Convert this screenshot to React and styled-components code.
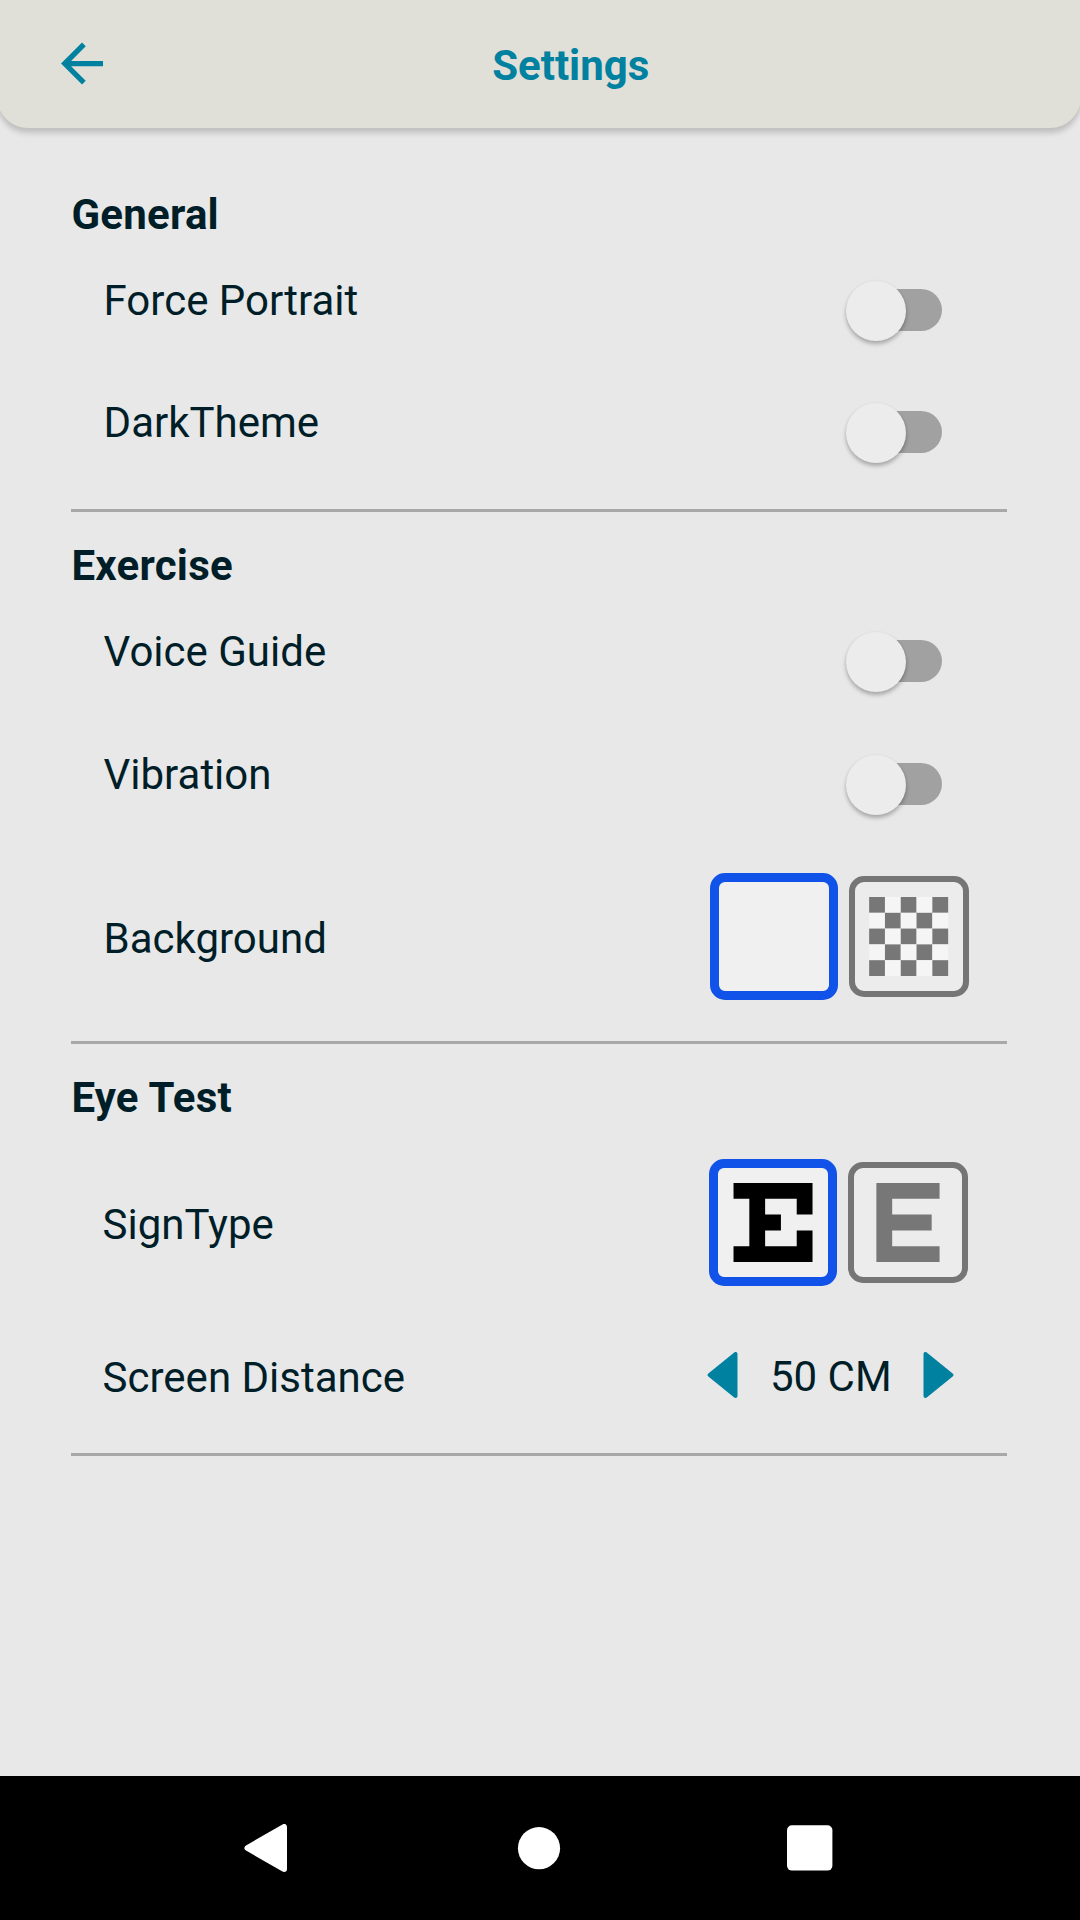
import React, { useState } from "react";
import styled, { createGlobalStyle } from "styled-components";

const GlobalStyle = createGlobalStyle`
  * { box-sizing: border-box; }
  body { margin: 0; background: #e8e8e8; font-family: Roboto, "Liberation Sans", sans-serif; }
  button { border: 0; padding: 0; background: none; font: inherit; color: inherit; }
  svg { display: block; }
`;

const Screen = styled.div`
  display: flex;
  flex-direction: column;
  width: 1080px;
  height: 1920px;
  overflow: hidden;
  background: #e8e8e8;
  color: #001e28;
  font-size: 42px;
  line-height: 50px;
`;

const Header = styled.header`
  display: grid;
  grid-template-columns: 63px 1fr;
  align-items: start;
  flex: none;
  height: 128px;
  margin: 0 -1px 0 -3px;
  padding: 32px 53px 0;
  color: #0081a0;
  background: #e0e0d8;
  border-radius: 0 0 31px 31px;
  box-shadow: 0 6px 5px rgba(0, 0, 0, 0.13), 0 2px 4px rgba(0, 0, 0, 0.06);
`;

const Title = styled.h1`
  margin: 9px 0 0 0.5px;
  font-size: 42px;
  line-height: 50px;
  font-weight: 700;
  text-align: center;
`;

const Content = styled.main`
  flex: 1;
  padding: 62px 73px 0 71.4px;
`;

const Section = styled.section`
  border-bottom: 3px solid #a8a8a8;
  height: ${(p) => p.$height}px;
  margin-bottom: 29px;
`;

const SectionTitle = styled.h2`
  margin: 0 0 36px;
  font-size: 42px;
  line-height: 50px;
  font-weight: 700;
  letter-spacing: 0.25px;
`;

const Row = styled.div`
  display: flex;
  justify-content: space-between;
  align-items: flex-start;
  height: ${(p) => p.$height}px;
  padding-left: ${(p) => p.$inset ?? 32.2}px;
  padding-right: ${(p) => p.$end ?? 65}px;
`;

const Label = styled.span`
  padding-top: ${(p) => p.$top ?? 0}px;
  white-space: nowrap;
`;

const Track = styled.button`
  display: flex;
  align-items: center;
  width: 84px;
  height: 42px;
  margin-top: 13px;
  border-radius: 21px;
  background: #a1a1a1;
`;

const Thumb = styled.span`
  flex: none;
  width: 60px;
  height: 60px;
  margin-top: 1px;
  margin-left: ${(p) => (p.$on ? 36 : -11.6)}px;
  border-radius: 50%;
  background: #ececec;
  box-shadow: 0 3px 4px rgba(0, 0, 0, 0.28), 0 0 3px rgba(0, 0, 0, 0.04);
`;

const Choices = styled.div`
  display: flex;
  align-items: center;
  gap: 11px;
`;

const Choice = styled.button`
  display: grid;
  place-items: center;
  width: ${(p) => (p.$selected ? 127.3 : 120.5)}px;
  height: ${(p) => (p.$selected ? 127 : 121)}px;
  border: ${(p) => (p.$selected ? "9px solid #1153e9" : "6px solid #757575")};
  border-radius: 15px;
  background: ${(p) => (p.$selected ? "#f0f0f0" : "#ececec")};
`;

const Stepper = styled.div`
  display: flex;
  align-items: center;
  gap: 32px;
  height: 46px;
`;

const StepButton = styled.button`
  width: 31px;
  height: 46px;
  color: #0081a0;
`;

const Value = styled.span`
  width: 120.6px;
  padding: 3px 1px 0 0;
  text-align: center;
  white-space: nowrap;
`;

const NavBar = styled.nav`
  display: grid;
  grid-template-columns: 43px 47px 46px;
  column-gap: 226.5px;
  align-items: center;
  flex: none;
  height: 144px;
  padding-left: 244px;
  background: #000;
  color: #fff;
`;

const BackArrow = () => (
  <svg width="63" height="63" viewBox="-0.2 0 24 24" fill="currentColor">
    <path d="M20 11H7.83l5.59-5.59L12 4l-8 8 8 8 1.41-1.41L7.83 13H20z" />
  </svg>
);

const Triangle = ({ flip }) => (
  <svg width="31" height="46" viewBox="0 0 31 46">
    <path
      transform={flip ? "translate(31 0) scale(-1 1)" : undefined}
      d="M2.6 23L28.5 2V44Z"
      fill="currentColor"
      stroke="currentColor"
      strokeWidth="4"
      strokeLinejoin="round"
    />
  </svg>
);

const Checker = () => (
  <svg width="79" height="79" viewBox="-0.01 0 5 5" overflow="visible">
    {Array.from({ length: 25 }, (_, i) => (
      <rect
        key={i}
        x={i % 5}
        y={Math.floor(i / 5)}
        width="1"
        height="1"
        fill={i % 2 ? "#f5f5f5" : "#777"}
      />
    ))}
  </svg>
);

const SerifSign = () => (
  <svg width="79" height="79" viewBox="0.03 0 5 5" overflow="visible">
    <path d="M0 0H5V2H4V1H2V2H3V3H2V4H4V3H5V5H0V4H1V1H0Z" fill="#000" />
  </svg>
);

const BlockSign = () => (
  <svg width="79" height="79" viewBox="-0.03 0 5 5">
    <path d="M.5 0H4.5V1H1.5V2H4V3H1.5V4H4.5V5H.5Z" fill="#777" />
  </svg>
);

function SwitchRow({ label, height }) {
  const [on, setOn] = useState(false);
  return (
    <Row $height={height}>
      <Label>{label}</Label>
      <Track role="switch" aria-checked={on} aria-label={label} onClick={() => setOn(!on)}>
        <Thumb $on={on} />
      </Track>
    </Row>
  );
}

export default function App() {
  const [background, setBackground] = useState(0);
  const [sign, setSign] = useState(0);
  const [distance, setDistance] = useState(50);

  return (
    <Screen>
      <GlobalStyle />
      <Header>
        <button aria-label="Back"><BackArrow /></button>
        <Title>Settings</Title>
      </Header>
      <Content>
        <Section $height={322}>
          <SectionTitle>General</SectionTitle>
          <SwitchRow label="Force Portrait" height={122} />
          <SwitchRow label="DarkTheme" height={100} />
        </Section>
        <Section $height={503}>
          <SectionTitle>Exercise</SectionTitle>
          <SwitchRow label="Voice Guide" height={123} />
          <SwitchRow label="Vibration" height={123} />
          <Row $height={127} $end={37.8}>
            <Label $top={41}>Background</Label>
            <Choices>
              <Choice $selected={background === 0} aria-label="Plain" onClick={() => setBackground(0)} />
              <Choice $selected={background === 1} aria-label="Checkered" onClick={() => setBackground(1)}>
                <Checker />
              </Choice>
            </Choices>
          </Row>
        </Section>
        <Section $height={383}>
          <SectionTitle>Eye Test</SectionTitle>
          <Row $height={193} $inset={31.2} $end={38.8}>
            <Label $top={41}>SignType</Label>
            <Choices>
              <Choice $selected={sign === 0} aria-label="Serif sign" onClick={() => setSign(0)}>
                <SerifSign />
              </Choice>
              <Choice $selected={sign === 1} aria-label="Block sign" onClick={() => setSign(1)}>
                <BlockSign />
              </Choice>
            </Choices>
          </Row>
          <Row $height={50} $inset={31.2} $end={53.5}>
            <Label $top={1}>Screen Distance</Label>
            <Stepper>
              <StepButton aria-label="Closer" onClick={() => setDistance(distance - 5)}>
                <Triangle />
              </StepButton>
              <Value>{distance} CM</Value>
              <StepButton aria-label="Farther" onClick={() => setDistance(distance + 5)}>
                <Triangle flip />
              </StepButton>
            </Stepper>
          </Row>
        </Section>
      </Content>
      <NavBar>
        <svg width="43" height="48" viewBox="0 0 43 48">
          <path d="M3.5 24L40 3V45Z" fill="currentColor" stroke="currentColor" strokeWidth="6" strokeLinejoin="round" />
        </svg>
        <svg width="47" height="43" viewBox="0 0 47 43">
          <circle cx="25" cy="21.2" r="21.1" fill="currentColor" />
        </svg>
        <svg width="46" height="46" viewBox="0 0 46 46">
          <rect x="0" y=".2" width="45.4" height="45.4" rx="5" fill="currentColor" />
        </svg>
      </NavBar>
    </Screen>
  );
}
